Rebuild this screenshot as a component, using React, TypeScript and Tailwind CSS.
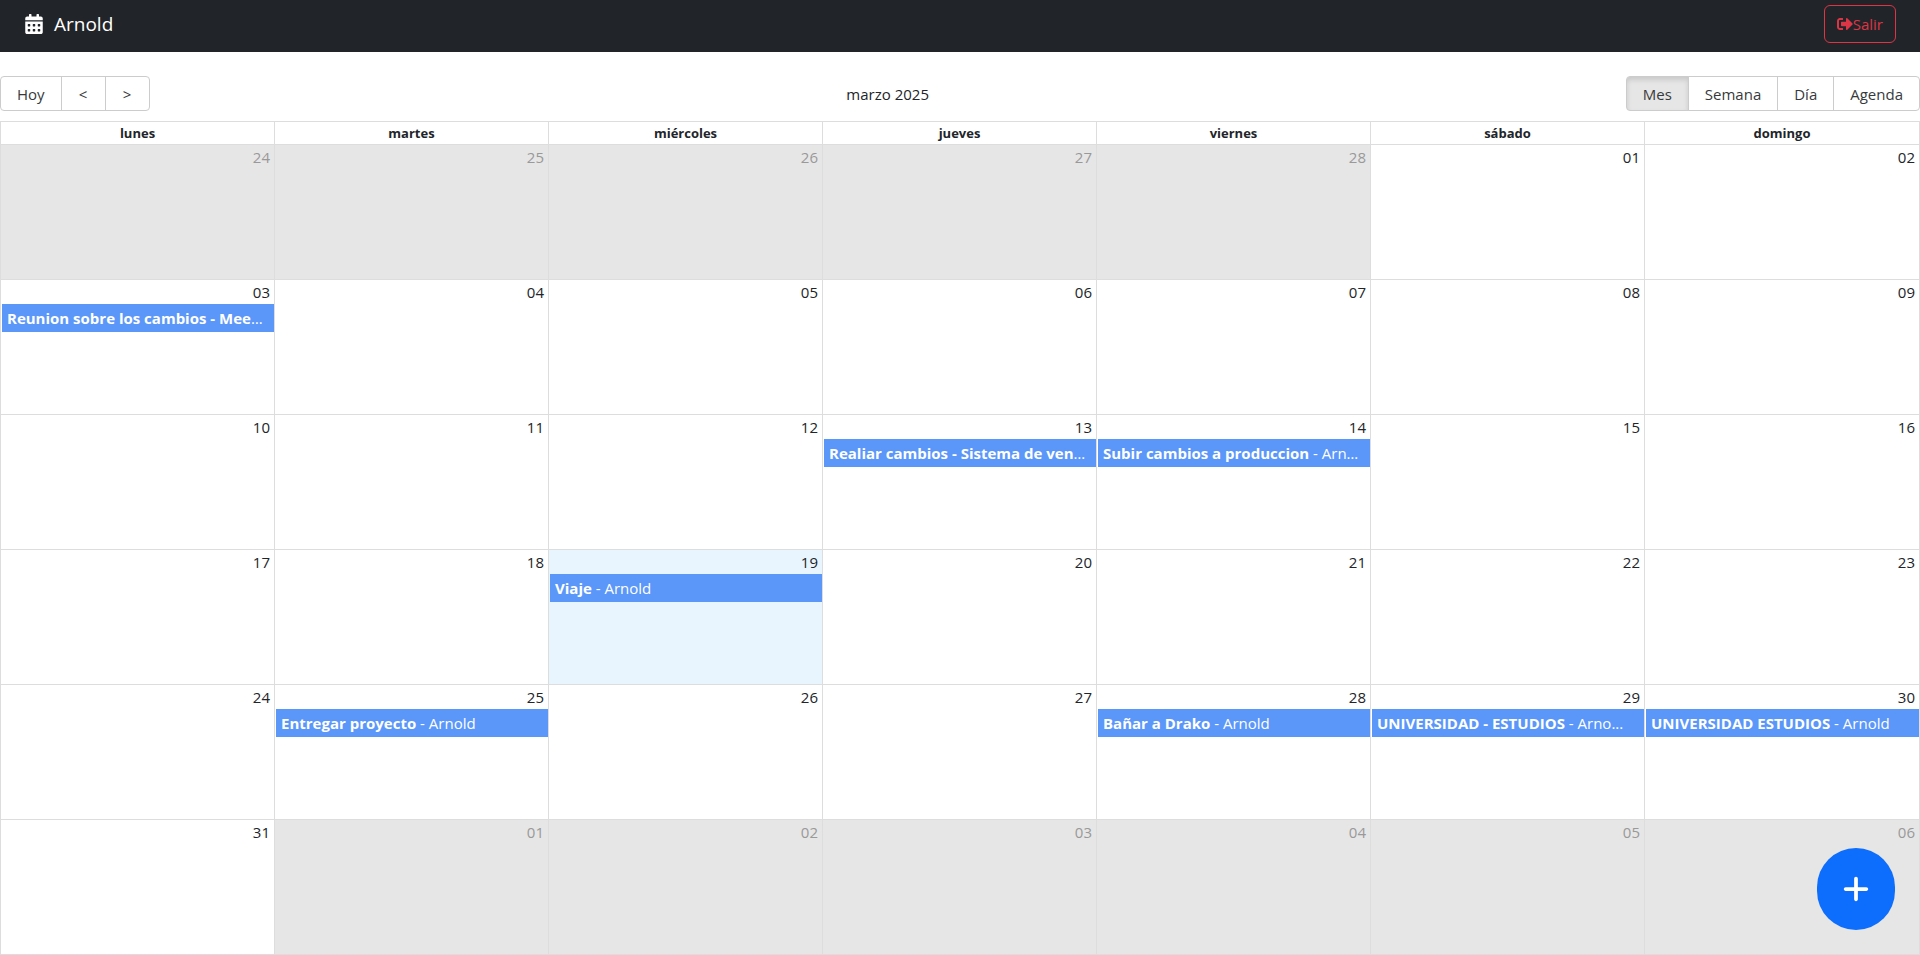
import React, { useState } from 'react';
import clsx from 'clsx';
import { FaCalendarAlt, FaSignOutAlt } from 'react-icons/fa';
import { FaPlus } from 'react-icons/fa6';

interface CalendarEvent {
    title: string;
    user: string;
}

interface CalendarDay {
    label: string;
    offRange?: boolean;
    today?: boolean;
    event?: CalendarEvent;
}

const weekDays = ['lunes', 'martes', 'miércoles', 'jueves', 'viernes', 'sábado', 'domingo'];
const views = ['Mes', 'Semana', 'Día', 'Agenda'];
const user = 'Arnold';

const events: Record<number, CalendarEvent> = {
    3: { title: 'Reunion sobre los cambios - Meeting', user },
    13: { title: 'Realiar cambios - Sistema de ventas', user },
    14: { title: 'Subir cambios a produccion', user },
    19: { title: 'Viaje', user },
    25: { title: 'Entregar proyecto', user },
    28: { title: 'Bañar a Drako', user },
    29: { title: 'UNIVERSIDAD - ESTUDIOS', user: 'Arno...' },
    30: { title: 'UNIVERSIDAD ESTUDIOS', user },
};

// March 2025 starts on a Saturday, so the grid opens on February 24
const getWeeks = (): CalendarDay[][] => {
    const weeks: CalendarDay[][] = [];
    for (let w = 0; w < 6; w++) {
        const week: CalendarDay[] = [];
        for (let d = 0; d < 7; d++) {
            const date = new Date(2025, 1, 24 + w * 7 + d);
            const inMonth = date.getMonth() === 2;
            const day = date.getDate();
            week.push({
                label: String(day).padStart(2, '0'),
                offRange: !inMonth,
                today: inMonth && day === 19,
                event: inMonth ? events[day] : undefined,
            });
        }
        weeks.push(week);
    }
    return weeks;
};

const Navbar: React.FC = () => (
    <nav className="flex h-[52px] items-center justify-between bg-[#212529] px-6 pb-1">
        <span className="flex items-center gap-2.5 text-[19px] text-white">
            <FaCalendarAlt className="h-5 w-auto" />
            {user}
        </span>
        <button
            type="button"
            className="flex h-[38px] items-center rounded-md border border-[#dc3545] px-3 text-[15px] text-[#dc3545]"
        >
            <FaSignOutAlt className="h-4 w-4" />
            <span>Salir</span>
        </button>
    </nav>
);

const buttonClass = "-ml-px h-[35px] min-w-[45px] border border-[#ccc] px-4 pt-0.5 text-[15px] text-[#373a3c] first:ml-0 first:rounded-l last:rounded-r";

const Toolbar: React.FC = () => {
    const [view, setView] = useState('Mes');

    return (
        <div className="mb-2.5 flex items-center">
            <div className="flex">
                <button type="button" className={buttonClass}>Hoy</button>
                <button type="button" className={buttonClass}>&lt;</button>
                <button type="button" className={buttonClass}>&gt;</button>
            </div>
            <span className="flex-1 pt-0.5 text-center">marzo 2025</span>
            <div className="flex">
                {views.map(name => (
                    <button
                        key={name}
                        type="button"
                        onClick={() => setView(name)}
                        className={clsx(
                            buttonClass,
                            view === name && 'relative border-[#adadad] bg-[#e6e6e6] shadow-[inset_0_3px_5px_rgba(0,0,0,0.125)]'
                        )}
                    >
                        {name}
                    </button>
                ))}
            </div>
        </div>
    );
};

const DayCell: React.FC<{ day: CalendarDay }> = ({ day }) => (
    <td
        className={clsx(
            'block min-w-0 border-r border-[#ddd] last:border-r-0',
            day.offRange && 'bg-[#e6e6e6] text-[#999]',
            day.today && 'bg-[#e8f5ff]'
        )}
    >
        <div className="h-6 pr-1 text-right leading-6">{day.label}</div>
        {day.event && (
            <div className="ml-px h-7 truncate bg-[#5b96f9] px-[5px] leading-7 text-white">
                <strong className="font-bold">{day.event.title}</strong> - {day.event.user}
            </div>
        )}
    </td>
);

const App: React.FC = () => {
    return (
        <div className="flex min-h-screen flex-col bg-white font-['Open_Sans','Noto_Sans',sans-serif] text-[15px] text-[#212529]">
            <Navbar />
            <main className="flex flex-1 flex-col pt-6">
                <Toolbar />
                <table className="flex flex-1 flex-col border border-[#ddd]">
                    <thead className="block">
                        <tr className="grid grid-cols-7">
                            {weekDays.map(name => (
                                <th key={name} className="h-[22px] border-r border-[#ddd] text-center text-[13px] leading-[22px] font-bold last:border-r-0">
                                    {name}
                                </th>
                            ))}
                        </tr>
                    </thead>
                    <tbody className="grid flex-1 grid-rows-6">
                        {getWeeks().map((week, i) => (
                            <tr key={i} className="grid grid-cols-7 border-t border-[#ddd]">
                                {week.map((day, j) => <DayCell key={j} day={day} />)}
                            </tr>
                        ))}
                    </tbody>
                </table>
            </main>
            <button
                type="button"
                aria-label="Agregar evento"
                className="fixed right-[25px] bottom-[25px] flex h-[82px] w-[78px] items-center justify-center rounded-full bg-[#0d6efd] text-white"
            >
                <FaPlus className="h-[30px] w-[30px]" />
            </button>
        </div>
    );
};

export default App;
